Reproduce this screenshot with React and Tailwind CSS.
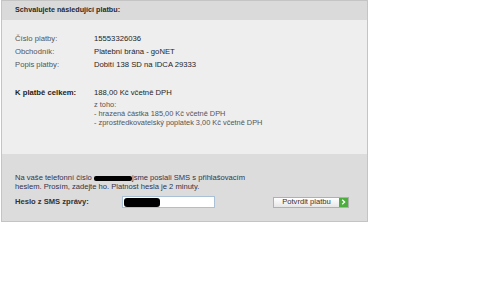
export default function App() {
  const rows = [
    ["Číslo platby:", "15553326036"],
    ["Obchodník:", "Platební brána - goNET"],
    ["Popis platby:", "Dobití 138 SD na IDCA 29333"],
  ];
  return (
    <div className="w-[500px] h-[281px] bg-white" style={{ fontFamily: '"Liberation Sans", Arial, sans-serif' }}>
      <div className="ml-px w-[367px] border border-[#c4c4c4]">
        <div className="h-[19px] bg-[#dadada] pl-[13px] flex items-center text-[7.2px] font-bold text-[#2a2a2a]">
          Schvalujete následující platbu:
        </div>
        <div className="bg-[#eeeeee] h-[134px] pt-[12px] pl-[13px] text-[7.7px]">
          {rows.map(([l, v]) => (
            <div key={l} className="flex h-[13px] items-center">
              <div className="w-[79px] text-[#555]">{l}</div>
              <div className="text-[#1e1e1e]">{v}</div>
            </div>
          ))}
          <div className="flex h-[13px] items-center mt-[15px]">
            <div className="w-[79px] font-bold text-[#1e1e1e]">K platbě celkem:</div>
            <div className="text-[#1e1e1e]">188,00 Kč včetně DPH</div>
          </div>
          <div className="ml-[79px] mt-[1px] leading-[9px] text-[#555] text-[7.4px]">
            <div>z toho:</div>
            <div>- hrazená částka 185,00 Kč včetně DPH</div>
            <div>- zprostředkovatelský poplatek 3,00 Kč včetně DPH</div>
          </div>
        </div>
        <div className="bg-[#dcdcdc] h-[67px] pt-[19px] pl-[13px] pr-[18px] text-[7.6px] text-[#33334a]">
          <div className="leading-[9px]">
            Na vaše telefonní číslo{" "}
            <span className="inline-block align-middle w-[38px] h-[5px] bg-black rounded-[2px]" />
            jsme poslali SMS s přihlašovacím
            <br />
            heslem. Prosím, zadejte ho. Platnost hesla je 2 minuty.
          </div>
          <div className="flex items-center mt-[5px] h-[12px]">
            <div className="w-[107px] font-bold text-[#333]">Heslo z SMS zprávy:</div>
            <div className="w-[93px] h-[12px] bg-white border border-[#a9c0d6] flex items-center">
              <span className="w-[36px] h-[9px] bg-black rounded-[3px] ml-[1px]" />
            </div>
            <div className="ml-auto flex h-[11px] w-[76px] border border-[#b0b0b0]">
              <div className="flex-1 flex items-center justify-center bg-gradient-to-b from-white to-[#e6e6e6] text-[#333] text-[7.6px]">
                Potvrdit platbu
              </div>
              <div className="w-[9px] bg-[#4cae3c] flex items-center justify-center">
                <svg width="5" height="6" viewBox="0 0 5 6">
                  <path d="M1.2 0.8 L3.6 3 L1.2 5.2" stroke="white" strokeWidth="1.3" fill="none" />
                </svg>
              </div>
            </div>
          </div>
        </div>
      </div>
    </div>
  );
}
